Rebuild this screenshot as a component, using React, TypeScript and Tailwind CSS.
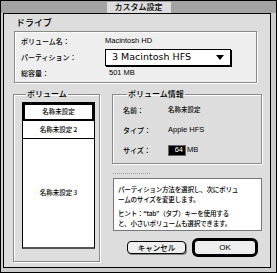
import React from "react";

const jp = "font-['Noto_Sans_CJK_JP',sans-serif]";
const latin = "font-['Liberation_Sans','Noto_Sans_CJK_JP',sans-serif]";

function InfoRow({ label, children }: { label: string; children: React.ReactNode }) {
  return (
    <div className="flex h-[20px] items-center">
      <span className="w-[45px] text-[7px]">{label}</span>
      {children}
    </div>
  );
}

export default function App() {
  return (
    <div className={`flex h-[273px] w-[277px] flex-col border border-black bg-[#cccccc] font-medium text-black ${jp}`}>
      {/* title bar */}
      <div className="flex h-[12px] shrink-0 items-center justify-center bg-[#a3a3a3]">
        <span className="flex h-[11px] items-center bg-[#dddddd] px-[8px] text-[8px] leading-none">
          カスタム設定
        </span>
      </div>

      <div className="mx-[2px] mb-[4px] mr-[5px] flex-1 border border-black bg-[#dddddd] pl-[10px] pt-[2px]">
        {/* drive */}
        <div className="pl-[2px] text-[9px] leading-[14px]">ドライブ</div>
        <div className="mt-[1px] flex h-[52px] w-[243px] flex-col justify-center border border-[#8a8a8a] bg-[#eeeeee] pl-[6px] shadow-[1px_1px_0_#fff,inset_1px_1px_0_#fff]">
          <div className="flex h-[15px] items-center">
            <span className="w-[84px] text-[7px]">ボリューム名：</span>
            <span className={`text-[7.5px] ${latin}`}>Macintosh HD</span>
          </div>
          <div className="flex h-[17px] items-center">
            <span className="w-[84px] text-[7px]">パーティション：</span>
            <div className="flex h-[17px] w-[126px] items-center justify-between border border-black bg-white pl-[6px] pr-[6px] shadow-[1px_1px_0_#000]">
              <span className="font-['DejaVu_Sans',sans-serif] text-[9.5px] font-normal">3 Macintosh HFS</span>
              <svg width="8" height="5" viewBox="0 0 8 5">
                <path d="M0 0H8L4 5Z" fill="#000" />
              </svg>
            </div>
          </div>
          <div className="flex h-[15px] items-center">
            <span className="w-[88px] text-[7px]">総容量：</span>
            <span className={`text-[7.5px] ${latin}`}>501 MB</span>
          </div>
        </div>

        <div className="mt-[6px] flex">
          {/* volume list */}
          <fieldset className="-ml-px h-[173px] w-[87px] border border-[#8a8a8a] pl-[8px] shadow-[1px_1px_0_#fff,inset_1px_1px_0_#fff]">
            <legend className="ml-[4px] px-[1px] text-[8px] leading-[10px]">ボリューム</legend>
            <div className="mt-[3px] flex h-[147px] w-[73px] flex-col border border-black border-b-2 border-b-[#555] bg-white text-[6.5px]">
              <div className="flex h-[18px] shrink-0 items-center justify-center border-2 border-black">名称未設定</div>
              <div className="flex h-[18px] shrink-0 items-center justify-center border-b border-black">名称未設定 2</div>
              <div className="flex flex-1 items-center justify-center">名称未設定 3</div>
            </div>
          </fieldset>

          <div className="ml-[12px] flex flex-col">
            {/* volume info */}
            <fieldset className="h-[75px] w-[150px] border border-[#8a8a8a] pl-[10px] shadow-[1px_1px_0_#fff,inset_1px_1px_0_#fff]">
              <legend className="ml-[4px] px-[1px] text-[8px] leading-[10px]">ボリューム情報</legend>
              <div className="mt-[1px] flex flex-col">
                <InfoRow label="名前：">
                  <span className="text-[6.5px]">名称未設定</span>
                </InfoRow>
                <InfoRow label="タイプ：">
                  <span className={`text-[7.5px] ${latin}`}>Apple HFS</span>
                </InfoRow>
                <InfoRow label="サイズ：">
                  <div className="flex items-center">
                    <div className="flex h-[11px] w-[18px] items-center justify-end border border-[#666] bg-black pr-[2px] text-[7.5px] text-white">
                      <span className={latin}>64</span>
                    </div>
                    <span className={`ml-[1px] text-[7.5px] ${latin}`}>MB</span>
                  </div>
                </InfoRow>
              </div>
            </fieldset>

            <div className="ml-[1px] mt-[9px] h-px w-[37px] border-t border-dotted border-[#999]" />

            {/* hint */}
            <div className="ml-[1px] mt-[4px] h-[53px] w-[149px] border border-[#777] bg-white px-[4px] pt-[5px] text-[6.6px] leading-[10px] tracking-[-0.25px]">
              <div>パーティション方法を選択し、次にボリュ</div>
              <div>ームのサイズを変更します。</div>
              <div className="mt-[4px]">ヒント：“tab”（タブ）キーを使用する</div>
              <div>と、小さいボリュームも選択できます。</div>
            </div>

            {/* buttons */}
            <div className="mt-[7px] flex items-center">
              <button className="ml-[15px] flex h-[13px] w-[59px] items-center justify-center rounded-[4px] border border-black bg-[#eeeeee] text-[7.5px] shadow-[1px_1px_0_#888]">
                キャンセル
              </button>
              <button className="ml-[6px] flex h-[19px] w-[66px] items-center justify-center rounded-[6px] border-[3px] border-black bg-[#eeeeee] text-[8px]">
                <span className={latin}>OK</span>
              </button>
            </div>
          </div>
        </div>
      </div>
    </div>
  );
}
